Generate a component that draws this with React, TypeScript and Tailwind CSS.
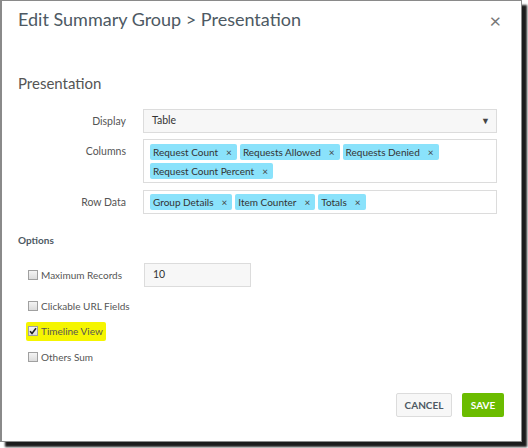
import React from "react"

const font = { fontFamily: 'Lato, "Open Sans", Arial, sans-serif' }

function Tag({ label }: { label: string }) {
  return (
    <span className="inline-flex items-center h-[16px] pl-[3px] pr-[5px] bg-[#8ae2fb] rounded-[2px] text-[10px] text-[#333] leading-none">
      {label}
      <span className="ml-[8px] text-[10px] text-[#444]">×</span>
    </span>
  )
}

function Check({ checked }: { checked?: boolean }) {
  return (
    <span className="w-[10px] h-[10px] border border-[#a0a0a0] bg-gradient-to-b from-[#f4f4f4] to-[#dcdcdc] flex items-center justify-center shrink-0">
      {checked && (
        <svg width="8" height="8" viewBox="0 0 8 8">
          <path d="M1 4.2 L3 6.4 L7 1.2" fill="none" stroke="#222" strokeWidth="1.6" />
        </svg>
      )}
    </span>
  )
}

function FieldRow({ label, children }: { label: string; children: React.ReactNode }) {
  return (
    <div className="flex">
      <div className="w-[125px] pr-[17px] pt-[5px] text-right text-[10.5px] text-[#555]">{label}</div>
      <div className="flex-1">{children}</div>
    </div>
  )
}

export default function App() {
  return (
    <div className="w-[528px] h-[448px] bg-white" style={font}>
      <div className="w-[522px] h-[442px] bg-white border-l-2 border-t border-r border-b border-[#8a8a8a] shadow-[5px_5px_2px_#1c1c1c] flex flex-col">
        {/* header */}
        <div className="flex items-center justify-between pl-[16px] pr-[20px] pt-[7px] h-[30px]">
          <span className="text-[18px] text-[#4d5963]">Edit Summary Group &gt; Presentation</span>
          <span className="text-[20px] text-[#777] leading-none">×</span>
        </div>

        <div className="pl-[16px] pr-[24px] mt-[42px]">
          <div className="text-[15px] text-[#555] leading-[20px]">Presentation</div>

          <div className="mt-[16px] flex flex-col gap-[6px]">
            <FieldRow label="Display">
              <div className="h-[24px] border border-[#dcdcdc] bg-[#f7f7f7] flex items-center justify-between pl-[8px] pr-[6px] text-[10.5px] text-[#333]">
                <span>Table</span>
                <span className="text-[9px] text-[#444]">▼</span>
              </div>
            </FieldRow>
            <FieldRow label="Columns">
              <div className="h-[44px] border border-[#dcdcdc] bg-white px-[6px] pt-[4px] flex flex-wrap content-start gap-x-[3px] gap-y-[3px]">
                <Tag label="Request Count" />
                <Tag label="Requests Allowed" />
                <Tag label="Requests Denied" />
                <Tag label="Request Count Percent" />
              </div>
            </FieldRow>
            <div className="mt-[1px]">
              <FieldRow label="Row Data">
                <div className="h-[24px] border border-[#dcdcdc] bg-white px-[6px] pt-[3px] flex gap-[3px]">
                  <Tag label="Group Details" />
                  <Tag label="Item Counter" />
                  <Tag label="Totals" />
                </div>
              </FieldRow>
            </div>
          </div>

          <div className="mt-[19px] text-[10px] font-bold text-[#4d5963]">Options</div>

          <div className="mt-[15px] pl-[10px] flex flex-col">
            <div className="flex items-center h-[24px]">
              <Check />
              <span className="ml-[3px] w-[103px] text-[10px] text-[#555]">Maximum Records</span>
              <div className="w-[107px] h-[24px] border border-[#dcdcdc] bg-[#f7f7f7] flex items-center pl-[8px] text-[10.5px] text-[#333]">10</div>
            </div>
            <div className="flex items-center h-[16px] mt-[11px]">
              <Check />
              <span className="ml-[3px] text-[10px] text-[#555]">Clickable URL Fields</span>
            </div>
            <div className="flex items-center h-[16px] mt-[9px]">
              <span className="flex items-center bg-[#f5f500] -ml-[2px] pl-[2px] pr-[3px] py-[2px] rounded-[2px]">
                <Check checked />
                <span className="ml-[3px] text-[10px] text-[#555]">Timeline View</span>
              </span>
            </div>
            <div className="flex items-center h-[16px] mt-[10px]">
              <Check />
              <span className="ml-[3px] text-[10px] text-[#555]">Others Sum</span>
            </div>
          </div>

          <div className="mt-[28px] flex justify-end gap-[10px] -mr-[7px]">
            <button className="h-[24px] w-[56px] border border-[#dcdcdc] bg-[#f7f7f7] rounded-[2px] text-[10px] font-bold text-[#4d5963]">CANCEL</button>
            <button className="h-[24px] w-[42px] bg-[#6bbc00] rounded-[2px] text-[10px] font-bold text-white">SAVE</button>
          </div>
        </div>
      </div>
    </div>
  )
}
